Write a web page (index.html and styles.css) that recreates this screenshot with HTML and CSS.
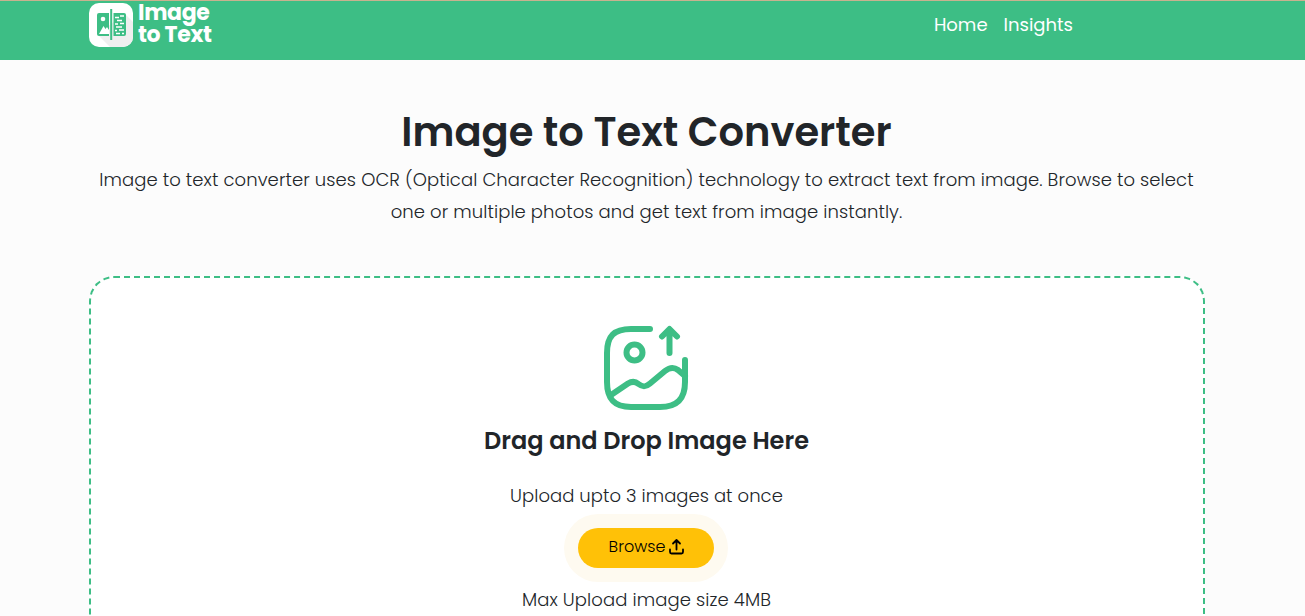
FILE: index.html
```html
<!DOCTYPE html>
<html lang="en">
<head>
    <meta charset="UTF-8">
    <meta name="viewport" content="width=device-width, initial-scale=1.0">
    <title>Image to Text Converter</title>
    <link rel="stylesheet" href="styles.css">
</head>
<body>
    <header class="header">
        <div class="container nav">
            <a class="logo" href="#">
                <svg class="logo-icon" width="44" height="44" viewBox="0 0 44 44">
                    <defs>
                        <clipPath id="tile"><rect width="44" height="44" rx="10"/></clipPath>
                    </defs>
                    <g clip-path="url(#tile)">
                        <rect width="44" height="44" fill="#fff"/>
                        <path d="M36 11L44 19V44H21L8 31Z" fill="#efefef"/>
                    </g>
                    <path d="M10 10H20V33H10Q8 33 8 31V12Q8 10 10 10Z" fill="#3dbe85"/>
                    <path d="M24.500 10H35Q37 10 37 12V31Q37 33 35 33H24.500Z" fill="#3dbe85"/>
                    <rect x="21.2" y="6" width="2" height="31" fill="#3dbe85"/>
                    <circle cx="14" cy="16" r="2.3" fill="#fff"/>
                    <path d="M10 31L14.5 23L16.5 26L18 24L20 27V31Z" fill="#fff"/>
                    <path d="M31 13H35M26 14.500H30M28 17.500H33M26 21H29M31 20.500H35M27 24H33M30 27H35M26 27.500H28M27 30.500H31M33 30.500H35" stroke="#fff" stroke-width="1.3" fill="none"/>
                </svg>
                <span class="logo-text">Image<br>to Text</span>
            </a>
            <nav class="menu">
                <a href="#">Home</a>
                <a href="#">Insights</a>
            </nav>
        </div>
    </header>

    <main class="container">
        <h1>Image to Text Converter</h1>
        <p class="intro">Image to text converter uses OCR (Optical Character Recognition) technology to extract text from image. Browse to select<br>one or multiple photos and get text from image instantly.</p>

        <div class="upload-box">
            <svg class="upload-image" width="86" height="86" viewBox="0 0 86 86" fill="none" stroke="#3dbe85" stroke-width="6" stroke-linecap="round" stroke-linejoin="round">
                <path d="M47 4H28C11 4 4 11 4 28V57C4 74 11 82 28 82H57C74 82 82 74 82 57V35"/>
                <circle cx="31.500" cy="27.500" r="8"/>
                <path d="M66.500 28V5M59 11.500L66.500 4L74 11.500"/>
                <path d="M8 70L25 58.500C29 56 32 56 35.500 59C40 62.500 43 62 47 58.500L62 46C67 42 71 42 75 45L82 51"/>
            </svg>
            <h2>Drag and Drop Image Here</h2>
            <p class="upload-note">Upload upto 3 images at once</p>
            <button type="button" class="browse"><span>Browse</span>
                <svg width="15" height="18" viewBox="0 0 15 18" fill="none" stroke="#000" stroke-width="1.8" stroke-linecap="round" stroke-linejoin="round">
                    <path d="M7.500 11.500V2.500M4 5.500L7.500 2L11 5.500M1 11.500V14Q1 15.500 2.500 15.500H12.500Q14 15.500 14 14V11.500"/>
                </svg>
            </button>
            <p class="size-note">Max Upload image size 4MB</p>
        </div>
    </main>
</body>
</html>
```

FILE: styles.css
```css
* {
    box-sizing: border-box;
}

body {
    height: 616px;
    margin: 0;
    overflow: hidden;
    background-color: #fcfcfc;
    font-family: Poppins, Inter, sans-serif;
    font-size: 18px;
    color: #212529;
}

.container {
    width: 1116px;
    margin: 0 0 0 89px;
}

.header {
    height: 60px;
    border-top: 1px solid #c9b28f;
    background-color: #3dbe85;
}

.nav {
    display: flex;
    justify-content: space-between;
    padding: 2px 132px 0 0;
}

.logo {
    display: flex;
    gap: 5px;
    color: #fff;
    text-decoration: none;
}

.logo-text {
    margin-top: -1px;
    font-size: 22px;
    font-weight: 700;
    line-height: 22px;
    letter-spacing: -0.35px;
    white-space: nowrap;
}

.menu {
    display: flex;
    gap: 16px;
    padding-top: 8px;
    line-height: 27px;
}

.menu a {
    color: #fff;
    text-decoration: none;
}

h1 {
    margin: 48px 1px 0 0;
    font-size: 40px;
    font-weight: 600;
    line-height: 48px;
    text-align: center;
    white-space: nowrap;
}

.intro {
    margin: 8px 1px 0 0;
    font-weight: 300;
    line-height: 32px;
    letter-spacing: 0.08px;
    text-align: center;
    white-space: nowrap;
}

.upload-box {
    display: flex;
    flex-direction: column;
    align-items: center;
    height: 440px;
    margin-top: 48px;
    padding: 47px 1px 0 0;
    border: 2px dashed #3dbe85;
    border-radius: 25px;
    background-color: #fff;
}

.upload-image {
    flex-shrink: 0;
    margin-right: 1px;
}

h2 {
    margin: 15px 0 0;
    font-size: 24px;
    font-weight: 600;
    line-height: 29px;
}

.upload-note {
    margin: 27px 0 0;
    font-weight: 300;
    line-height: 27px;
    letter-spacing: 0.04px;
}

.browse {
    display: flex;
    align-items: center;
    justify-content: center;
    gap: 4px;
    width: 136px;
    height: 40px;
    margin: 19px 1px 18px 0;
    padding: 0 0 3px 1px;
    border: none;
    border-radius: 20px;
    background-color: #ffc107;
    box-shadow: 0 0 0 14px #fefaf0;
    color: #000;
    font-family: inherit;
    font-size: 16px;
    font-weight: 300;
    cursor: pointer;
}

.size-note {
    margin: 0;
    font-weight: 300;
    line-height: 27px;
    letter-spacing: 0.1px;
}
```
